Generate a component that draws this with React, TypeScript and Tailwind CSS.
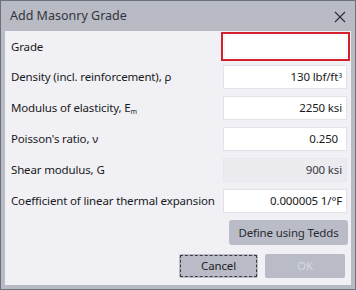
import React from 'react';

const font = { fontFamily: '"Noto Sans", "Open Sans", sans-serif' };

type Row = {
  label: React.ReactNode;
  value: React.ReactNode;
  disabled?: boolean;
  pad?: string;
};

const rows: Row[] = [
  {
    label: 'Density (incl. reinforcement), ρ',
    value: (
      <>
        130 lbf/ft<sup className="text-[7px] relative -top-[1px]">3</sup>
      </>
    ),
  },
  {
    label: (
      <>
        Modulus of elasticity, E<sub className="text-[7px]">m</sub>
      </>
    ),
    value: '2250 ksi',
  },
  { label: "Poisson's ratio, ν", value: '0.250', pad: 'pr-[8px]' },
  { label: 'Shear modulus, G', value: '900 ksi', disabled: true },
  { label: 'Coefficient of linear thermal expansion', value: '0.000005 1/°F' },
];

const App = () => {
  return (
    <div
      className="w-[356px] h-[290px] border border-[#6d717d] bg-[#b8bbc4] flex flex-col text-[11.5px] tracking-[-0.15px] text-[#1a1a1a]"
      style={font}
    >
      <div className="h-[30px] flex items-center justify-between pl-[9px] pr-[9px] shrink-0">
        <span className="text-[12.5px] tracking-normal text-[#33343c]">Add Masonry Grade</span>
        <svg width="12" height="12" viewBox="0 0 12 12" className="mt-[1px]">
          <path d="M1 1 L11 11 M11 1 L1 11" stroke="#2e3038" strokeWidth="1.2" fill="none" />
        </svg>
      </div>

      <div className="flex-1 mx-[4px] mb-[4px] bg-[#f0f0f5] flex flex-col pt-[1px]">
        <div className="flex items-center justify-between h-[29px]">
          <span className="pl-[6px]">Grade</span>
          <div className="w-[129px] h-[29px] shrink-0 mr-[1px] border-2 border-[#d3202b] bg-white p-[1px]">
            <div className="w-full h-full border border-[#f4f4f8]" />
          </div>
        </div>

        {rows.map((r, i) => (
          <div
            key={i}
            className={`flex items-center justify-between h-[24px] ${i === 0 ? 'mt-[4px]' : 'mt-[7px]'}`}
          >
            <span className="pl-[6px] whitespace-nowrap">{r.label}</span>
            <div
              className={`w-[124px] h-[24px] shrink-0 mr-[4px] border flex items-center justify-end ${
                r.pad ?? 'pr-[4px]'
              } ${
                r.disabled
                  ? 'bg-[#ebebf0] border-[#e6e6ec] text-[#3a3a44]'
                  : 'bg-white border-[#e2e2e9]'
              }`}
            >
              {r.value}
            </div>
          </div>
        ))}

        <div className="flex justify-end mt-[7px]">
          <button className="w-[119px] h-[25px] mr-[3px] rounded-[3px] bg-[#b9bcc6] text-[#2a2b33]">
            Define using Tedds
          </button>
        </div>

        <div className="flex justify-end gap-[7px] mt-[9px] pr-[6px]">
          <button className="w-[79px] h-[24px] rounded-[2px] bg-[#b9bcc6] p-[1px]">
            <div className="w-full h-full border border-dashed border-[#3a3b44] flex items-center justify-center text-[#1f2028]">
              Cancel
            </div>
          </button>
          <button className="w-[80px] h-[24px] rounded-[2px] bg-[#b9bcc6] text-[#d5d7de]">OK</button>
        </div>
      </div>
    </div>
  );
};

export default App;
